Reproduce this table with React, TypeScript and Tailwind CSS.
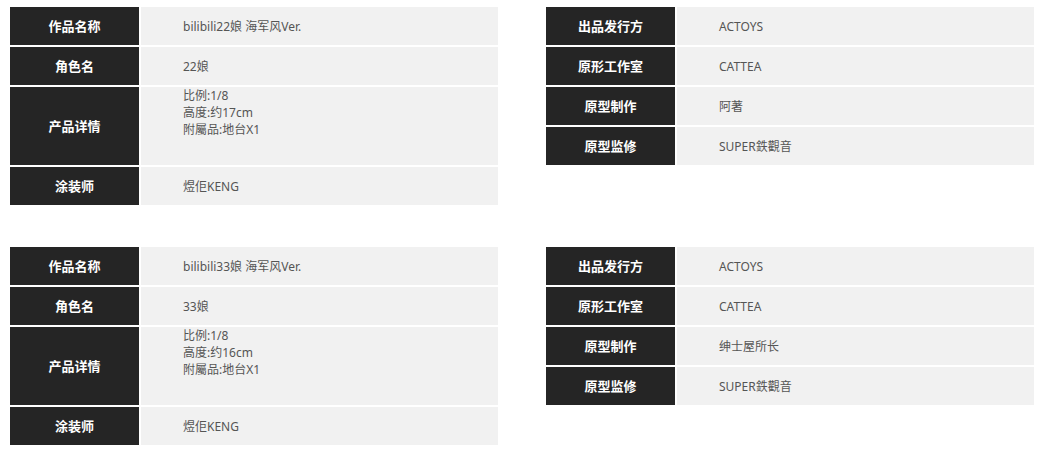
interface IInfoRow {
    label: string
    value: string[]
    tall?: boolean
}

interface IFigure {
    left: IInfoRow[]
    right: IInfoRow[]
}

const figures: IFigure[] = [
    {
        left: [
            { label: '作品名称', value: ['bilibili22娘 海军风Ver.'] },
            { label: '角色名', value: ['22娘'] },
            {
                label: '产品详情',
                value: ['比例:1/8', '高度:约17cm', '附屬品:地台X1'],
                tall: true,
            },
            { label: '涂装师', value: ['煜佢KENG'] },
        ],
        right: [
            { label: '出品发行方', value: ['ACTOYS'] },
            { label: '原形工作室', value: ['CATTEA'] },
            { label: '原型制作', value: ['阿著'] },
            { label: '原型监修', value: ['SUPER鉄觀音'] },
        ],
    },
    {
        left: [
            { label: '作品名称', value: ['bilibili33娘 海军风Ver.'] },
            { label: '角色名', value: ['33娘'] },
            {
                label: '产品详情',
                value: ['比例:1/8', '高度:约16cm', '附屬品:地台X1'],
                tall: true,
            },
            { label: '涂装师', value: ['煜佢KENG'] },
        ],
        right: [
            { label: '出品发行方', value: ['ACTOYS'] },
            { label: '原形工作室', value: ['CATTEA'] },
            { label: '原型制作', value: ['绅士屋所长'] },
            { label: '原型监修', value: ['SUPER鉄觀音'] },
        ],
    },
]

function InfoTable({ rows }: { rows: IInfoRow[] }) {
    return (
        <div className="flex w-[488px] flex-col gap-[2px]">
            {rows.map((row, index) => (
                <div
                    key={index}
                    className={`flex gap-[2px] ${row.tall ? 'h-[78px]' : 'h-[38px]'}`}
                >
                    <div className="flex w-[129px] shrink-0 items-center justify-center bg-[#252525] pt-[2px] text-[13px] font-bold text-white">
                        {row.label}
                    </div>
                    {row.tall ? (
                        <div className="flex flex-1 flex-col bg-[#f1f1f1] pl-[42px] text-[12px] leading-[17px] text-[#555]">
                            {row.value.map((line, i) => (
                                <div key={i}>{line}</div>
                            ))}
                        </div>
                    ) : (
                        <div className="flex flex-1 items-center bg-[#f1f1f1] pl-[42px] pt-[2px] text-[12px] text-[#555]">
                            {row.value[0]}
                        </div>
                    )}
                </div>
            ))}
        </div>
    )
}

export default function App() {
    return (
        <div
            className="flex w-[1046px] flex-col gap-[42px] bg-white pl-[10px] pt-[7px]"
            style={{ fontFamily: '"Noto Sans", "Noto Sans CJK SC", sans-serif' }}
        >
            {figures.map((figure, index) => (
                <div key={index} className="flex items-start gap-[48px]">
                    <InfoTable rows={figure.left} />
                    <InfoTable rows={figure.right} />
                </div>
            ))}
        </div>
    )
}
